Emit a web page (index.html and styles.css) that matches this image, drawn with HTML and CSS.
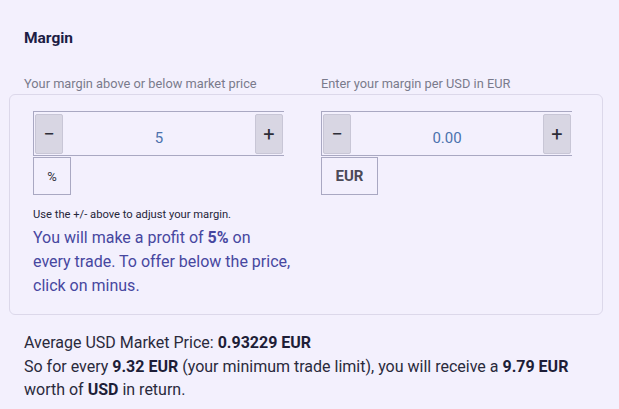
FILE: index.html
```html
<!DOCTYPE html>
<html>
<head>
<meta charset="utf-8">
<link rel="stylesheet" href="styles.css">
</head>
<body>
<div class="page">
  <h2 class="title">Margin</h2>
  <div class="labels">
    <div class="label">Your margin above or below market price</div>
    <div class="label">Enter your margin per USD in EUR</div>
  </div>
  <div class="box">
    <div class="col">
      <div class="stepper">
        <button class="btn">−</button>
        <div class="value">5</div>
        <button class="btn">+</button>
      </div>
      <div class="unit">%</div>
      <div class="hint">Use the +/- above to adjust your margin.</div>
      <div class="profit"><span>You will make a profit of <b>5%</b> on</span><span>every trade. To offer below the price,</span><span>click on minus.</span></div>
    </div>
    <div class="col">
      <div class="stepper">
        <button class="btn">−</button>
        <div class="value">0.00</div>
        <button class="btn">+</button>
      </div>
      <div class="unit unit-eur">EUR</div>
    </div>
  </div>
  <div class="summary">
    <div>Average USD Market Price: <b>0.93229 EUR</b></div>
    <div>So for every <b>9.32 EUR</b> (your minimum trade limit), you will receive a <b>9.79 EUR</b> worth of <b>USD</b> in return.</div>
  </div>
</div>
</body>
</html>
```

FILE: styles.css
```css
html, body {
  margin: 0;
  padding: 0;
  background: #f3f0fd;
  font-family: Roboto, "Liberation Sans", sans-serif;
}
.page {
  padding: 28px 16px 0 9px;
}
.title {
  margin: 0 0 0 15px;
  font-size: 15.5px;
  line-height: 20px;
  font-weight: 700;
  color: #1d1d45;
}
.labels {
  display: grid;
  grid-template-columns: 297px 1fr;
  margin: 28px 0 0 15px;
}
.label {
  font-size: 12.8px;
  line-height: 16px;
  color: #7a7b8c;
}
.box {
  margin-top: 2px;
  border: 1px solid #dcd8ea;
  border-radius: 6px;
  padding: 16px 0 16px 23px;
  display: grid;
  grid-template-columns: 270px 270px;
  column-gap: 18px;
  align-items: start;
}
.col {
  display: flex;
  flex-direction: column;
  align-items: flex-start;
}
.stepper {
  width: 248px;
  height: 43px;
  box-sizing: content-box;
  border: 1px solid #a9a8c2;
  border-right: none;
  padding: 0 1px 0 1px;
  display: flex;
  align-items: center;
}
.btn {
  width: 28px;
  height: 40px;
  margin: 0;
  padding: 0;
  background: #d8d6e3;
  border: 1px solid #c8c6d6;
  border-radius: 2px;
  color: #2e2e38;
  font-family: Roboto, "Liberation Sans", sans-serif;
  font-size: 20px;
  line-height: 36px;
  flex: none;
}
.value {
  flex: 1;
  text-align: center;
  font-size: 15px;
  color: #4b72ad;
  padding-top: 9px;
}
.unit {
  margin-top: 1px;
  width: 36px;
  height: 36px;
  border: 1px solid #a9a8c2;
  display: flex;
  align-items: center;
  justify-content: center;
  font-size: 13px;
  color: #333340;
}
.unit-eur {
  width: 55px;
  font-size: 15px;
  font-weight: 700;
  color: #4b4a58;
}
.hint {
  margin-top: 13px;
  font-size: 11.2px;
  line-height: 14px;
  color: #26263a;
}
.profit {
  margin-top: 4px;
  width: 258px;
  display: flex;
  flex-direction: column;
  font-size: 16px;
  line-height: 24px;
  color: #4747a0;
}
.profit span {
  white-space: nowrap;
}
.profit b {
  font-weight: 700;
}
.summary {
  margin: 16px 0 0 15px;
  font-size: 16px;
  line-height: 23.5px;
  color: #2a2a3c;
}
.summary b {
  color: #1e1e38;
}
```
